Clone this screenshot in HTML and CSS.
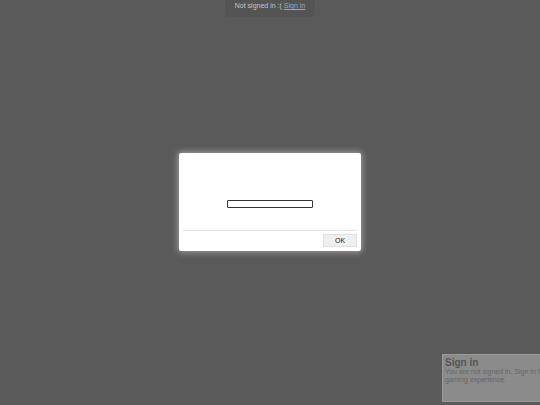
FILE: index.html
```html
<!DOCTYPE html>
<html lang="en">
<head>
	<meta charset="UTF-8">
	<title>Game</title>
	<link rel="stylesheet" href="styles.css">
</head>
<body>
	<div class="topBar">
		<div class="status">Not signed in :( <a href="#" class="signLink">Sign in</a></div>
	</div>

	<div class="stage">
		<div class="dialog">
			<div class="body">
				<input type="text" class="field" />
			</div>
			<div class="actions">
				<button class="okButton">OK</button>
			</div>
		</div>
	</div>

	<div class="notice">
		<div class="noticeTitle">Sign in</div>
		<div class="noticeText">You are not signed in. Sign in for a better gaming experience.</div>
	</div>
</body>
</html>
```

FILE: styles.css
```css
html, body {
	width: 100%;
	height: 100%;
	margin: 0;
	padding: 0;
}
body {
	background: #5a5a5a;
	font-family: "Liberation Sans", Arial, sans-serif;
	overflow: hidden;
	display: flex;
	flex-direction: column;
}
.topBar {
	display: flex;
	justify-content: center;
}
.status {
	background: #545454;
	color: #c4c4c4;
	font-size: 7px;
	width: 90px;
	height: 17px;
	line-height: 12px;
	text-align: center;
	border-radius: 0 0 3px 3px;
}
.signLink {
	color: #9aa3c4;
	text-decoration: underline;
}
.stage {
	flex: 1;
	display: flex;
	justify-content: center;
	padding-top: 136px;
}
.dialog {
	width: 182px;
	height: 98px;
	background: #fff;
	border-radius: 2px;
	box-shadow: 0 0 6px 1px rgba(255, 255, 255, 0.45);
	display: flex;
	flex-direction: column;
	padding: 0 4px;
	box-sizing: border-box;
}
.body {
	height: 78px;
	display: flex;
	justify-content: center;
	align-items: flex-start;
	padding-top: 47px;
	box-sizing: border-box;
	border-bottom: 1px solid #e2e2e2;
}
.field {
	width: 86px;
	height: 8px;
	padding: 0;
	margin: 0;
	border: 1px solid #333;
	border-radius: 1px;
	box-sizing: border-box;
	outline: none;
}
.actions {
	display: flex;
	justify-content: flex-end;
	padding-top: 3px;
}
.okButton {
	width: 34px;
	height: 13px;
	padding: 0;
	background: #efefef;
	border: 1px solid #e0e0e0;
	font-family: "Liberation Sans", Arial, sans-serif;
	font-size: 7px;
	color: #222;
	line-height: 11px;
}
.notice {
	position: absolute;
	left: 442px;
	top: 354px;
	width: 150px;
	height: 48px;
	background: #8b8b8b;
	border: 1px solid #9a9a9a;
	box-sizing: border-box;
	padding: 2px 2px;
}
.noticeTitle {
	font-size: 10px;
	font-weight: bold;
	color: #555;
	line-height: 11px;
}
.noticeText {
	font-size: 7px;
	color: #666;
	line-height: 8px;
}
```
